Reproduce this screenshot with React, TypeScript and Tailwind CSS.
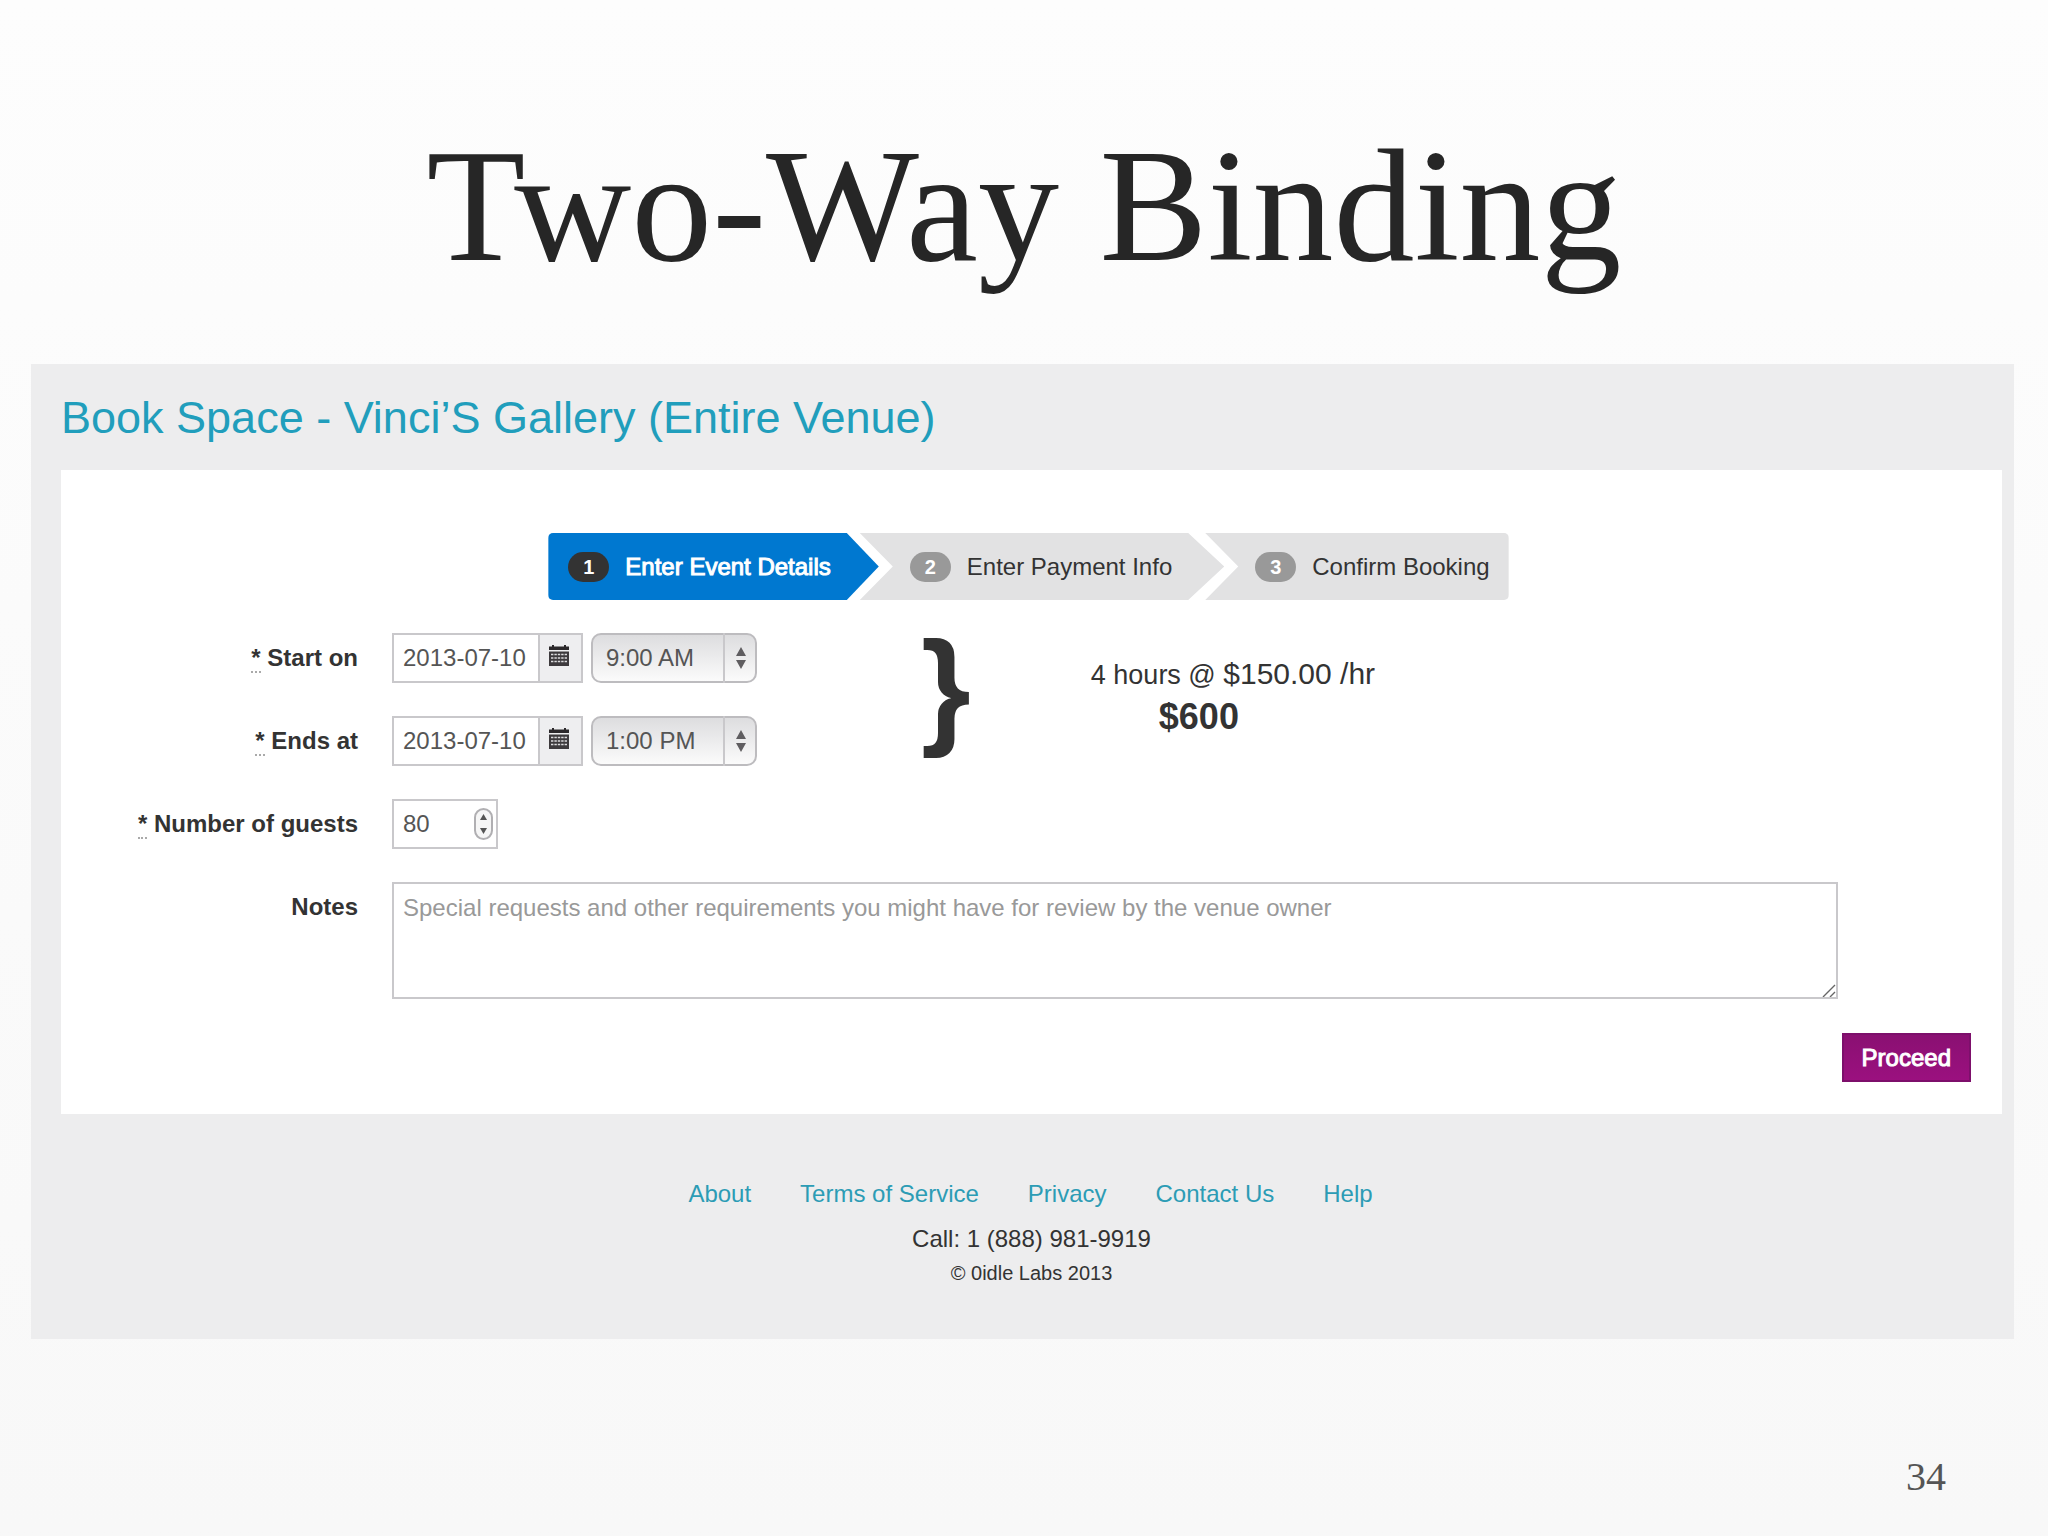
import React, {useState} from "react";

const Horas = ["8:00 AM", "9:00 AM", "10:00 AM", "11:00 AM", "12:00 PM", "1:00 PM", "2:00 PM"];
const Links = ["About", "Terms of Service", "Privacy", "Contact Us", "Help"];

const CalendarIcon : React.FC = () =>
{
    return(
        <svg width="20" height="21" viewBox="0 0 20 21" aria-hidden="true">
            <path d="M0 1.5h3V0h2v1.5h10V0h2v1.5h3V5H0z" fill="#2b282b"/>
            <path d="M0 6.5h20V21H0z" fill="#3d3a3d"/>
            <path d="M2 9.5h16M2 13h16M2 16.5h16" stroke="#dcdcde" strokeWidth="1.5" strokeDasharray="2.4 1"/>
        </svg>
    )
}

interface RowProps
{
    label: string;
    id: string;
    required?: boolean;
    children: React.ReactNode;
}

const Row : React.FC<RowProps> = ({label, id, required, children}) =>
{
    return(
        <div className="flex items-start gap-[34px]">
            <label htmlFor={id} className="w-[297px] shrink-0 text-right text-2xl leading-[50px] font-bold text-[#333]">
                {required && <><abbr className="border-b-2 border-dotted border-[#aaa] no-underline">*</abbr>{" "}</>}
                {label}
            </label>
            {children}
        </div>
    )
}

interface WhenProps
{
    id: string;
    date: string;
    time: string;
    onDate: (v: string) => void;
    onTime: (v: string) => void;
}

const When : React.FC<WhenProps> = ({id, date, time, onDate, onTime}) =>
{
    return(
        <div className="flex gap-2">
            <div className="flex h-[50px] border-2 border-[#c9c8cb] bg-white">
                <input id={id} type="text" value={date} onChange={(e) => {onDate(e.target.value)}}
                className="w-[144px] pl-[9px] text-2xl text-[#555] outline-none"/>
                <button type="button" aria-label="Open calendar"
                className="flex w-[43px] items-start justify-center border-l-2 border-[#c9c8cb] bg-[#eeeef0] pt-[10px] pr-[3px]">
                    <CalendarIcon/>
                </button>
            </div>
            <div className="relative">
                <select aria-label="Time" value={time} onChange={(e) => {onTime(e.target.value)}}
                className="h-[50px] w-[166px] appearance-none rounded-[10px] border-2 border-[#bdbcbf] bg-linear-to-b from-[#dddddf] to-[#fbfbfb] pl-[13px] text-2xl text-[#555] outline-none">
                    {Horas.map((h) => <option key={h}>{h}</option>)}
                </select>
                <span className="pointer-events-none absolute inset-y-0 right-0 flex w-[34px] items-center justify-center border-l-2 border-[#c9c8cb]">
                    <svg width="10" height="22" viewBox="0 0 10 22" fill="#5f5d60" aria-hidden="true">
                        <path d="M5 0l5 9H0zM5 22l5-9H0z"/>
                    </svg>
                </span>
            </div>
        </div>
    )
}

const App : React.FC = () =>
{
    const [StartDate, SetStartDate] = useState<string>("2013-07-10");
    const [StartTime, SetStartTime] = useState<string>("9:00 AM");
    const [EndDate, SetEndDate] = useState<string>("2013-07-10");
    const [EndTime, SetEndTime] = useState<string>("1:00 PM");
    const [Guests, SetGuests] = useState<number>(80);
    const [Notes, SetNotes] = useState<string>("");

    const Inicio = Horas.indexOf(StartTime);
    const Fim = Horas.indexOf(EndTime);
    const Total = Math.max(0, Fim - Inicio);

    return(
        <div className="min-h-screen bg-linear-to-b from-[#fdfdfd] to-[#f8f8f8] pt-[126px] font-['Liberation_Sans',Arial,sans-serif] text-[#333]">
            <h1 className="mb-[78px] text-center font-['Liberation_Serif',serif] text-[162px] leading-[160px] text-[#262626]">Two-Way Binding</h1>

            <main className="mr-[34px] ml-[31px] bg-[#ededee] pr-3 pb-[52px] pl-[30px]">
                <h2 className="pt-[26px] pb-6 text-[45px] leading-[56px] text-[#219ebc]">Book Space - Vinci’S Gallery (Entire Venue)</h2>

                <form className="bg-white pt-[63px] pb-8" onSubmit={(e) => {e.preventDefault()}}>
                    <ol className="mb-[33px] flex justify-center pr-[6px] text-2xl">
                        <li className="flex h-[67px] items-center gap-4 rounded-l-[5px] bg-[#0078d0] pr-12 pl-5 text-white [clip-path:polygon(0_0,calc(100%-32px)_0,100%_50%,calc(100%-32px)_100%,0_100%)]">
                            <span className="flex h-[30px] w-[41px] items-center justify-center rounded-full bg-[#333] text-xl font-bold">1</span>
                            <span className="[-webkit-text-stroke:1px_white]">Enter Event Details</span>
                        </li>
                        <li className="-ml-[19px] flex h-[67px] items-center gap-4 bg-[#e2e2e3] pr-[52px] pl-[50px] [clip-path:polygon(0_0,calc(100%-36px)_0,100%_50%,calc(100%-36px)_100%,0_100%,33px_50%)]">
                            <span className="flex h-[30px] w-[41px] items-center justify-center rounded-full bg-[#999] text-xl font-bold text-white">2</span>
                            <span>Enter Payment Info</span>
                        </li>
                        <li className="-ml-[19px] flex h-[67px] items-center gap-4 rounded-r-[5px] bg-[#e2e2e3] pr-[19px] pl-[50px] [clip-path:polygon(0_0,100%_0,100%_100%,0_100%,33px_50%)]">
                            <span className="flex h-[30px] w-[41px] items-center justify-center rounded-full bg-[#999] text-xl font-bold text-white">3</span>
                            <span>Confirm Booking</span>
                        </li>
                    </ol>

                    <div className="flex flex-col gap-[33px]">
                        <div className="flex items-start">
                            <div className="flex flex-col gap-[33px]">
                                <Row label="Start on" id="start" required>
                                    <When id="start" date={StartDate} time={StartTime} onDate={SetStartDate} onTime={SetStartTime}/>
                                </Row>
                                <Row label="Ends at" id="end" required>
                                    <When id="end" date={EndDate} time={EndTime} onDate={SetEndDate} onTime={SetEndTime}/>
                                </Row>
                            </div>
                            <span className="ml-[164px] text-[128px] leading-[108px] font-bold">{"}"}</span>
                            <div className="ml-[120px] pt-[21px]">
                                <p className="text-[27px] leading-10">4 hours @ <span className="text-3xl leading-10">$150.00 /hr</span></p>
                                <p className="pl-[68px] text-4xl leading-[44px] font-bold">${Total * 150}</p>
                            </div>
                        </div>

                        <Row label="Number of guests" id="guests" required>
                            <div className="flex h-[50px] w-[106px] items-center border-2 border-[#c9c8cb] bg-white pr-[3px]">
                                <input id="guests" type="number" value={Guests} onChange={(e) => {SetGuests(Number(e.target.value))}}
                                className="min-w-0 flex-1 appearance-none pl-[9px] text-2xl text-[#555] outline-none [-moz-appearance:textfield] [&::-webkit-inner-spin-button]:appearance-none"/>
                                <div className="flex h-8 w-[19px] flex-col items-center justify-between rounded-full border-2 border-[#b0afb2] bg-[#f6f6f6] py-1">
                                    <button type="button" aria-label="More guests" onClick={() => {SetGuests(Guests + 1)}}>
                                        <svg className="block" width="7" height="6" viewBox="0 0 7 6" fill="#555"><path d="M3.5 0L7 6H0z"/></svg>
                                    </button>
                                    <button type="button" aria-label="Fewer guests" onClick={() => {SetGuests(Guests - 1)}}>
                                        <svg className="block" width="7" height="6" viewBox="0 0 7 6" fill="#555"><path d="M3.5 6L7 0H0z"/></svg>
                                    </button>
                                </div>
                            </div>
                        </Row>

                        <div className="pr-[164px]">
                            <Row label="Notes" id="notes">
                                <div className="relative flex min-w-0 flex-1">
                                    <textarea id="notes" value={Notes} onChange={(e) => {SetNotes(e.target.value)}}
                                    placeholder="Special requests and other requirements you might have for review by the venue owner"
                                    className="h-[117px] w-full resize-none border-2 border-[#c9c8cb] px-[9px] py-2 text-2xl leading-8 outline-none placeholder:text-[#999]"/>
                                    <svg className="pointer-events-none absolute right-[2px] bottom-[2px]" width="14" height="14" viewBox="0 0 14 14" stroke="#666" strokeWidth="1.4" aria-hidden="true">
                                        <path d="M1 14L13 2M8 14l5-5"/>
                                    </svg>
                                </div>
                            </Row>
                        </div>
                    </div>

                    <div className="mt-[34px] flex justify-end pr-[31px]">
                        <button type="submit" className="h-[49px] border-2 border-[#7d0f6b] bg-linear-to-b from-[#8a1072] to-[#9b107f] px-[18px] text-2xl text-white [-webkit-text-stroke:1px_white]">Proceed</button>
                    </div>
                </form>

                <footer className="pt-16 text-center text-2xl">
                    <nav className="flex justify-center gap-[49px] pr-[2px] leading-8 text-[#2c9cb5]">
                        {Links.map((l) => <a key={l} href="#">{l}</a>)}
                    </nav>
                    <p className="mt-[13px] leading-8">Call: 1 (888) 981-9919</p>
                    <p className="mt-1 text-xl leading-7">© 0idle Labs 2013</p>
                </footer>
            </main>

            <p className="mt-[118px] pr-[102px] text-right font-['Liberation_Serif',serif] text-[40px] leading-10 text-[#555]">34</p>
        </div>
    )
}

export default App;
